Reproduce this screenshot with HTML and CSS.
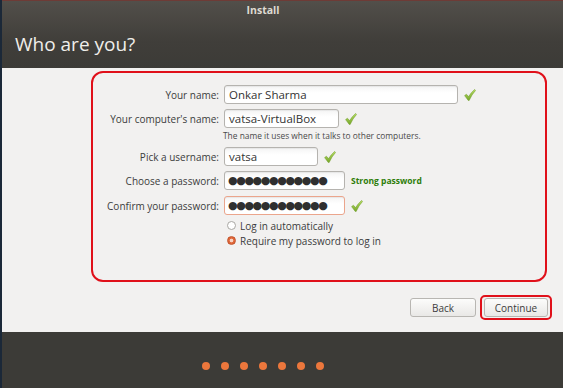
FILE: index.html
```html
<!DOCTYPE html>
<html>
<head>
<meta charset="utf-8">
<link rel="stylesheet" href="styles.css">
</head>
<body>
<div class="window">
  <header class="header">
    <div class="titlebar">Install</div>
    <h1 class="page-title">Who are you?</h1>
  </header>
  <main class="content">
    <div class="highlight-box">
      <div class="row">
        <label class="label">Your name:</label>
        <div class="input w-name">Onkar Sharma</div>
        <svg class="check" viewBox="0 0 12 12"><use href="#chk"/></svg>
      </div>
      <div class="row">
        <label class="label">Your computer's name:</label>
        <div class="input w-computer">vatsa-VirtualBox</div>
        <svg class="check" viewBox="0 0 12 12"><use href="#chk"/></svg>
      </div>
      <div class="hint">The name it uses when it talks to other computers.</div>
      <div class="row">
        <label class="label">Pick a username:</label>
        <div class="input w-user">vatsa</div>
        <svg class="check" viewBox="0 0 12 12"><use href="#chk"/></svg>
      </div>
      <div class="row row-pw">
        <label class="label">Choose a password:</label>
        <div class="input w-pw dots">●●●●●●●●●●●●</div>
        <span class="strength">Strong password</span>
      </div>
      <div class="row row-pw">
        <label class="label">Confirm your password:</label>
        <div class="input w-pw dots focus">●●●●●●●●●●●●</div>
        <svg class="check" viewBox="0 0 12 12"><use href="#chk"/></svg>
      </div>
      <div class="radio-row first">
        <span class="radio"></span><span>Log in automatically</span>
      </div>
      <div class="radio-row">
        <span class="radio on"></span><span>Require my password to log in</span>
      </div>
    </div>
    <div class="actions">
      <button class="btn back">Back</button>
      <div class="btn-ring"><button class="btn">Continue</button></div>
    </div>
  </main>
  <footer class="footer">
    <div class="dots-bar">
      <span class="dot"></span><span class="dot"></span><span class="dot"></span><span class="dot"></span><span class="dot"></span><span class="dot"></span><span class="dot"></span>
    </div>
  </footer>
</div>
<svg width="0" height="0" class="defs">
  <defs>
    <linearGradient id="g" x1="0" y1="0" x2="0" y2="1">
      <stop offset="0" stop-color="#b6dc63"/>
      <stop offset="1" stop-color="#78a82c"/>
    </linearGradient>
    <symbol id="chk" viewBox="0 0 12 12">
      <path d="M0.6 6.6 L2.4 5.2 L4.6 7.6 Q7.2 3.2 10.6 0.4 L11.6 1.4 Q7.6 5.6 5.2 11.4 L4.2 11.4 Z" fill="url(#g)" stroke="#6f9c27" stroke-width="0.5" stroke-linejoin="round"/>
    </symbol>
  </defs>
</svg>
</body>
</html>
```
FILE: styles.css
```css
* { box-sizing: border-box; }
html, body { margin: 0; padding: 0; }
body {
  width: 563px;
  height: 388px;
  overflow: hidden;
  background: #f2f1f0;
  font-family: "Open Sans", "Liberation Sans", sans-serif;
  color: #3c3c3c;
}
.defs { position: absolute; }
.window {
  height: 388px;
  border-left: 2px solid #1b2838;
  display: flex;
  flex-direction: column;
}
.header {
  height: 68px;
  border-top: 1px solid #6e3b36;
  background: linear-gradient(#524f4a, #403e3a 60%, #3c3b37);
  color: #efebe6;
}
.titlebar {
  width: 522px;
  text-align: center;
  font-size: 10.5px;
  font-weight: bold;
  line-height: 19px;
  color: #dfdbd2;
}
.page-title {
  margin: 12px 0 0 13px;
  font-weight: normal;
  font-size: 19px;
  line-height: 24px;
  color: #f0eeea;
}
.content {
  height: 264px;
  background: #f2f1f0;
  padding-top: 3px;
}
.highlight-box {
  margin-left: 89px;
  width: 456px;
  height: 211px;
  border: 2px solid #e0101a;
  border-radius: 12px;
  padding-top: 12px;
  font-size: 10px;
}
.row {
  display: flex;
  align-items: center;
  height: 19px;
  margin-bottom: 5px;
}
.row-pw { margin-bottom: 6px; }
.label {
  width: 126px;
  text-align: right;
  margin-right: 5px;
  color: #3c3c3c;
}
.input {
  height: 19px;
  border: 1px solid #b5b3af;
  border-radius: 3px;
  background: linear-gradient(#f4f4f4, #ffffff 40%);
  box-shadow: inset 0 1px 1px rgba(0,0,0,0.06);
  font-size: 11.5px;
  line-height: 17px;
  padding-left: 4px;
  color: #333;
}
.input.focus { border-color: #eba58c; }
.w-name { width: 234px; }
.w-computer { width: 115px; }
.w-user { width: 94px; }
.w-pw { width: 121px; }
.dots {
  font-family: "DejaVu Sans", sans-serif;
  font-size: 11px;
  letter-spacing: -1.4px;
  padding-left: 3px;
  color: #2f2f2f;
}
.check {
  width: 12px;
  height: 12px;
  margin-left: 6px;
}
.strength {
  margin-left: 6px;
  font-size: 8.5px;
  font-weight: bold;
  color: #2d7d08;
}
.hint {
  margin-left: 130px;
  height: 16px;
  line-height: 16px;
  font-size: 8.4px;
  margin-top: -5px;
  margin-bottom: 3px;
  color: #4a4a4a;
}
.radio-row {
  display: flex;
  align-items: center;
  height: 15px;
  margin-left: 134px;
  font-size: 10px;
}
.radio-row.first { margin-top: -3px; }
.radio {
  width: 9px;
  height: 9px;
  border-radius: 50%;
  border: 1px solid #a9a7a3;
  background: #fff;
  margin-right: 4px;
}
.radio.on {
  border-color: #c2522a;
  background: radial-gradient(circle, #f6d3c4 0 1.4px, #e0683a 2.2px);
}
.actions {
  display: flex;
  justify-content: flex-end;
  align-items: center;
  margin-top: 13px;
  padding-right: 11px;
}
.btn {
  height: 19px;
  border: 1px solid #b8b6b2;
  border-radius: 3px;
  background: linear-gradient(#fcfcfb, #e9e8e6);
  font-family: inherit;
  font-size: 10px;
  color: #3c3c3c;
  padding: 0;
  width: 64px;
}
.btn.back { width: 66px; margin-right: 4px; }
.btn-ring {
  border: 2px solid #e0101a;
  border-radius: 5px;
  padding: 1px 2px;
  display: flex;
}
.footer {
  flex: 1;
  background: #3c3b37;
  padding-top: 30px;
}
.dots-bar {
  width: 522px;
  display: flex;
  justify-content: center;
  gap: 11px;
}
.dot {
  width: 8px;
  height: 8px;
  border-radius: 50%;
  background: #ec773c;
}
```
